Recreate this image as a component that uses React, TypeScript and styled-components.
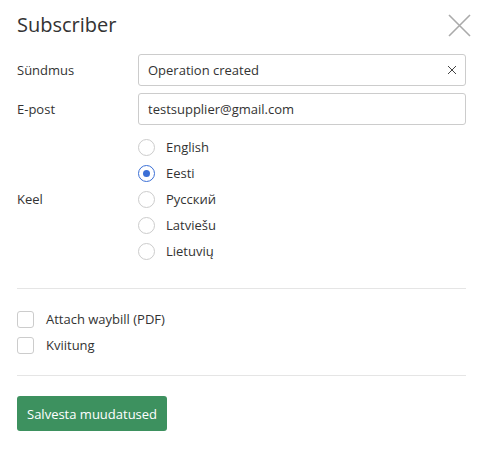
import { useState } from 'react';
import styled, { createGlobalStyle } from 'styled-components';

const GlobalStyle = createGlobalStyle`
  html, body {
    margin: 0;
    padding: 0;
    background: #fff;
  }
  body {
    font-family: 'Open Sans', 'Noto Sans', sans-serif;
    color: #333;
  }
`;

const Dialog = styled.div`
  width: 481px;
  box-sizing: border-box;
  padding: 10px 15px 0 17px;
`;

const Header = styled.div`
  display: flex;
  align-items: center;
  justify-content: space-between;
  height: 30px;
  margin-bottom: 14px;
`;

const Title = styled.h2`
  margin: 0;
  font-size: 20px;
  font-weight: 400;
  line-height: 28px;
  color: #333;
`;

const CloseButton = styled.button`
  border: 0;
  background: none;
  padding: 0;
  margin-right: -5px;
  width: 24px;
  height: 24px;
  display: flex;
  align-items: center;
  justify-content: center;
  cursor: pointer;
`;

const FormRow = styled.div<{ $gap?: number }>`
  display: grid;
  grid-template-columns: 121px 1fr;
  align-items: center;
  margin-bottom: ${(p) => p.$gap ?? 7}px;
`;

const Label = styled.label`
  font-size: 13px;
  color: #333;
`;

const InputWrap = styled.div`
  position: relative;
`;

const TextInput = styled.input`
  width: 100%;
  box-sizing: border-box;
  height: 32px;
  border: 1px solid #ccc;
  border-radius: 3px;
  padding: 0 28px 0 9px;
  font-family: inherit;
  font-size: 13px;
  color: #333;
  outline: none;
`;

const ClearButton = styled.button`
  position: absolute;
  right: 9px;
  top: 50%;
  transform: translateY(-50%);
  border: 0;
  background: none;
  padding: 0;
  display: flex;
  cursor: pointer;
`;

const RadioList = styled.div`
  display: flex;
  flex-direction: column;
`;

const OptionRow = styled.label`
  display: flex;
  align-items: center;
  height: 26px;
  gap: 11px;
  font-size: 13px;
  color: #333;
  cursor: pointer;
`;

const RadioCircle = styled.span<{ $checked: boolean }>`
  width: 17px;
  height: 17px;
  box-sizing: border-box;
  border-radius: 50%;
  border: 1px solid ${(p) => (p.$checked ? '#3b6fd6' : '#ccc')};
  display: flex;
  align-items: center;
  justify-content: center;

  &::after {
    content: '';
    width: 7px;
    height: 7px;
    border-radius: 50%;
    background: #3b6fd6;
    display: ${(p) => (p.$checked ? 'block' : 'none')};
  }
`;

const CheckBox = styled.span<{ $checked: boolean }>`
  width: 17px;
  height: 17px;
  box-sizing: border-box;
  border-radius: 3px;
  border: 1px solid #ccc;
  background: ${(p) => (p.$checked ? '#3b6fd6' : '#fff')};
`;

const CheckRow = styled(OptionRow)`
  gap: 12px;
`;

const Divider = styled.hr`
  border: 0;
  border-top: 1px solid #e5e5e5;
  margin: 0;
`;

const CheckSection = styled.div`
  padding: 17px 0 17px;
`;

const Footer = styled.div`
  padding-top: 20px;
`;

const SaveButton = styled.button`
  height: 35px;
  padding: 0 10px;
  border: 0;
  border-radius: 3px;
  background: #3d915f;
  color: #fff;
  font-family: inherit;
  font-size: 13px;
  cursor: pointer;
`;

const languages = ['English', 'Eesti', 'Русский', 'Latviešu', 'Lietuvių'];

export default function App() {
  const [lang, setLang] = useState('Eesti');
  const [checks, setChecks] = useState({ waybill: false, receipt: false });

  return (
    <Dialog>
      <GlobalStyle />
      <Header>
        <Title>Subscriber</Title>
        <CloseButton aria-label="Close">
          <svg width="23" height="23" viewBox="0 0 23 23">
            <path d="M1 1L22 22M22 1L1 22" stroke="#aaa" strokeWidth="1.6" fill="none" />
          </svg>
        </CloseButton>
      </Header>

      <FormRow>
        <Label>Sündmus</Label>
        <InputWrap>
          <TextInput defaultValue="Operation created" />
          <ClearButton aria-label="Clear">
            <svg width="10" height="10" viewBox="0 0 10 10">
              <path d="M1 1L9 9M9 1L1 9" stroke="#444" strokeWidth="1" fill="none" />
            </svg>
          </ClearButton>
        </InputWrap>
      </FormRow>

      <FormRow $gap={9}>
        <Label>E-post</Label>
        <InputWrap>
          <TextInput defaultValue="testsupplier@gmail.com" />
        </InputWrap>
      </FormRow>

      <FormRow $gap={24}>
        <Label>Keel</Label>
        <RadioList>
          {languages.map((l) => (
            <OptionRow key={l} onClick={() => setLang(l)}>
              <RadioCircle $checked={lang === l} />
              {l}
            </OptionRow>
          ))}
        </RadioList>
      </FormRow>

      <Divider />

      <CheckSection>
        <CheckRow onClick={() => setChecks((c) => ({ ...c, waybill: !c.waybill }))}>
          <CheckBox $checked={checks.waybill} />
          Attach waybill (PDF)
        </CheckRow>
        <CheckRow onClick={() => setChecks((c) => ({ ...c, receipt: !c.receipt }))}>
          <CheckBox $checked={checks.receipt} />
          Kviitung
        </CheckRow>
      </CheckSection>

      <Divider />

      <Footer>
        <SaveButton>Salvesta muudatused</SaveButton>
      </Footer>
    </Dialog>
  );
}
